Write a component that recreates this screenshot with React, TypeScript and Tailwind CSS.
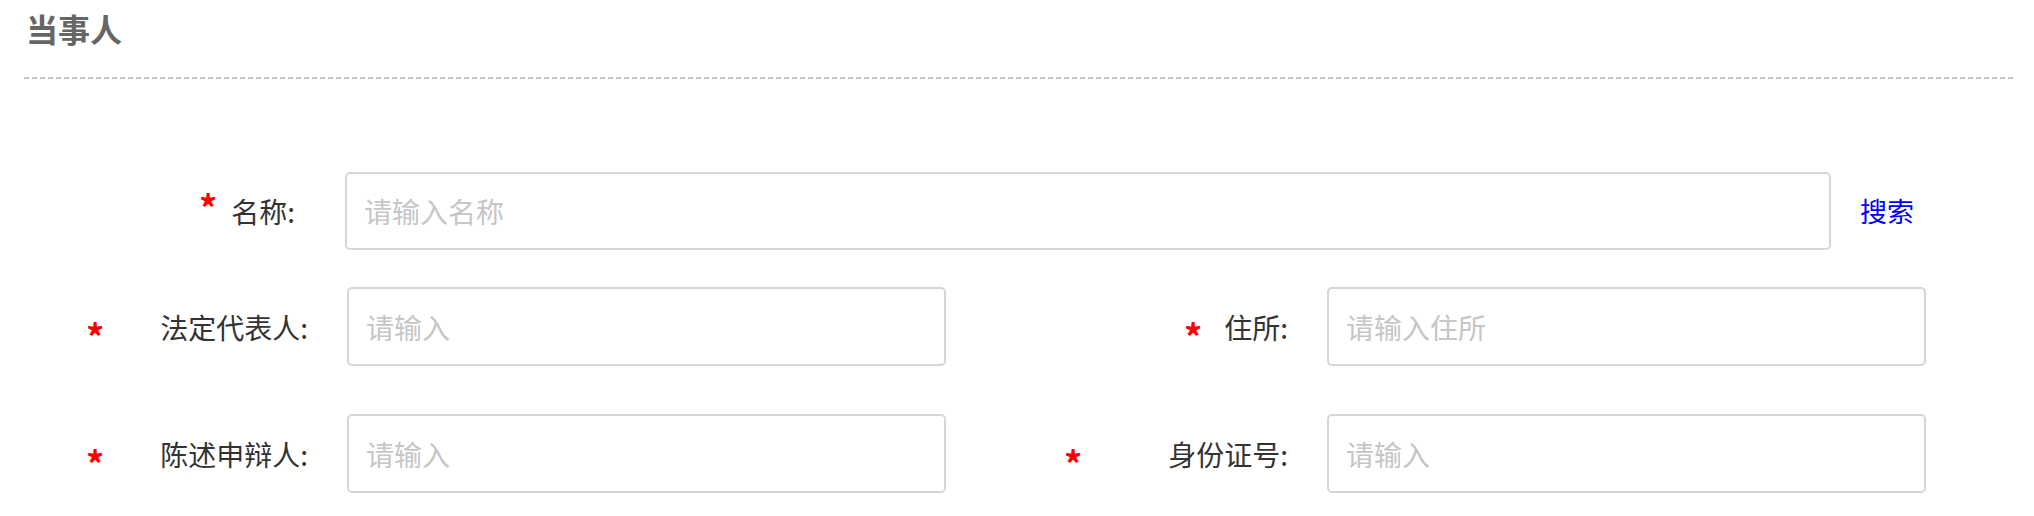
import React from 'react';

const font = { fontFamily: '"Noto Sans CJK SC", "Noto Sans", sans-serif' };

interface FieldProps {
  label: string;
  placeholder: string;
  labelWidth: string;
  starGap: string;
}

function Field({ label, placeholder, labelWidth, starGap }: FieldProps) {
  return (
    <div className="flex items-center">
      <div className={`flex items-center justify-end pr-[39px] ${labelWidth}`}>
        <span className={`text-[36px] font-bold leading-none text-[#ff0000] translate-y-[8px] ${starGap}`}>*</span>
        <span className="text-[28px] text-[#333]">{label}</span>
      </div>
      <input
        type="text"
        placeholder={placeholder}
        className="w-[599px] h-[79px] rounded-[5px] border-2 border-[#d6d6d6] pl-[17px] text-[28px] text-[#333] outline-none placeholder:text-[#c6c6c6]"
      />
    </div>
  );
}

export default function App() {
  return (
    <div className="w-[2034px] h-[516px] bg-white" style={font}>
      <div className="pl-[26px] pt-[4px] h-[52px] text-[32px] font-bold leading-[48px] text-[#666]">当事人</div>
      <div className="mx-[24px] mt-[25px] mr-[20px] h-[2px] bg-[image:repeating-linear-gradient(to_right,#c4c4c4_0_5px,transparent_5px_8px)]" />

      <div className="mt-[93px] flex items-center">
        <div className="flex w-[345px] items-center justify-end pr-[50px]">
          <span className="mr-[14px] -translate-y-[5px] text-[36px] font-bold leading-none text-[#ff0000]">*</span>
          <span className="text-[28px] text-[#333]">名称:</span>
        </div>
        <input
          type="text"
          placeholder="请输入名称"
          className="w-[1486px] h-[78px] rounded-[5px] border-2 border-[#d6d6d6] pl-[17px] text-[28px] text-[#333] outline-none placeholder:text-[#c6c6c6]"
        />
        <button className="ml-[29px] text-[27px] text-[#0000ff]">搜索</button>
      </div>

      <div className="mt-[37px] flex">
        <Field label="法定代表人:" placeholder="请输入" labelWidth="w-[347px]" starGap="mr-[56px]" />
        <Field label="住所:" placeholder="请输入住所" labelWidth="w-[381px]" starGap="mr-[22px]" />
      </div>

      <div className="mt-[48px] flex">
        <Field label="陈述申辩人:" placeholder="请输入" labelWidth="w-[347px]" starGap="mr-[56px]" />
        <Field label="身份证号:" placeholder="请输入" labelWidth="w-[381px]" starGap="mr-[86px]" />
      </div>
    </div>
  );
}
